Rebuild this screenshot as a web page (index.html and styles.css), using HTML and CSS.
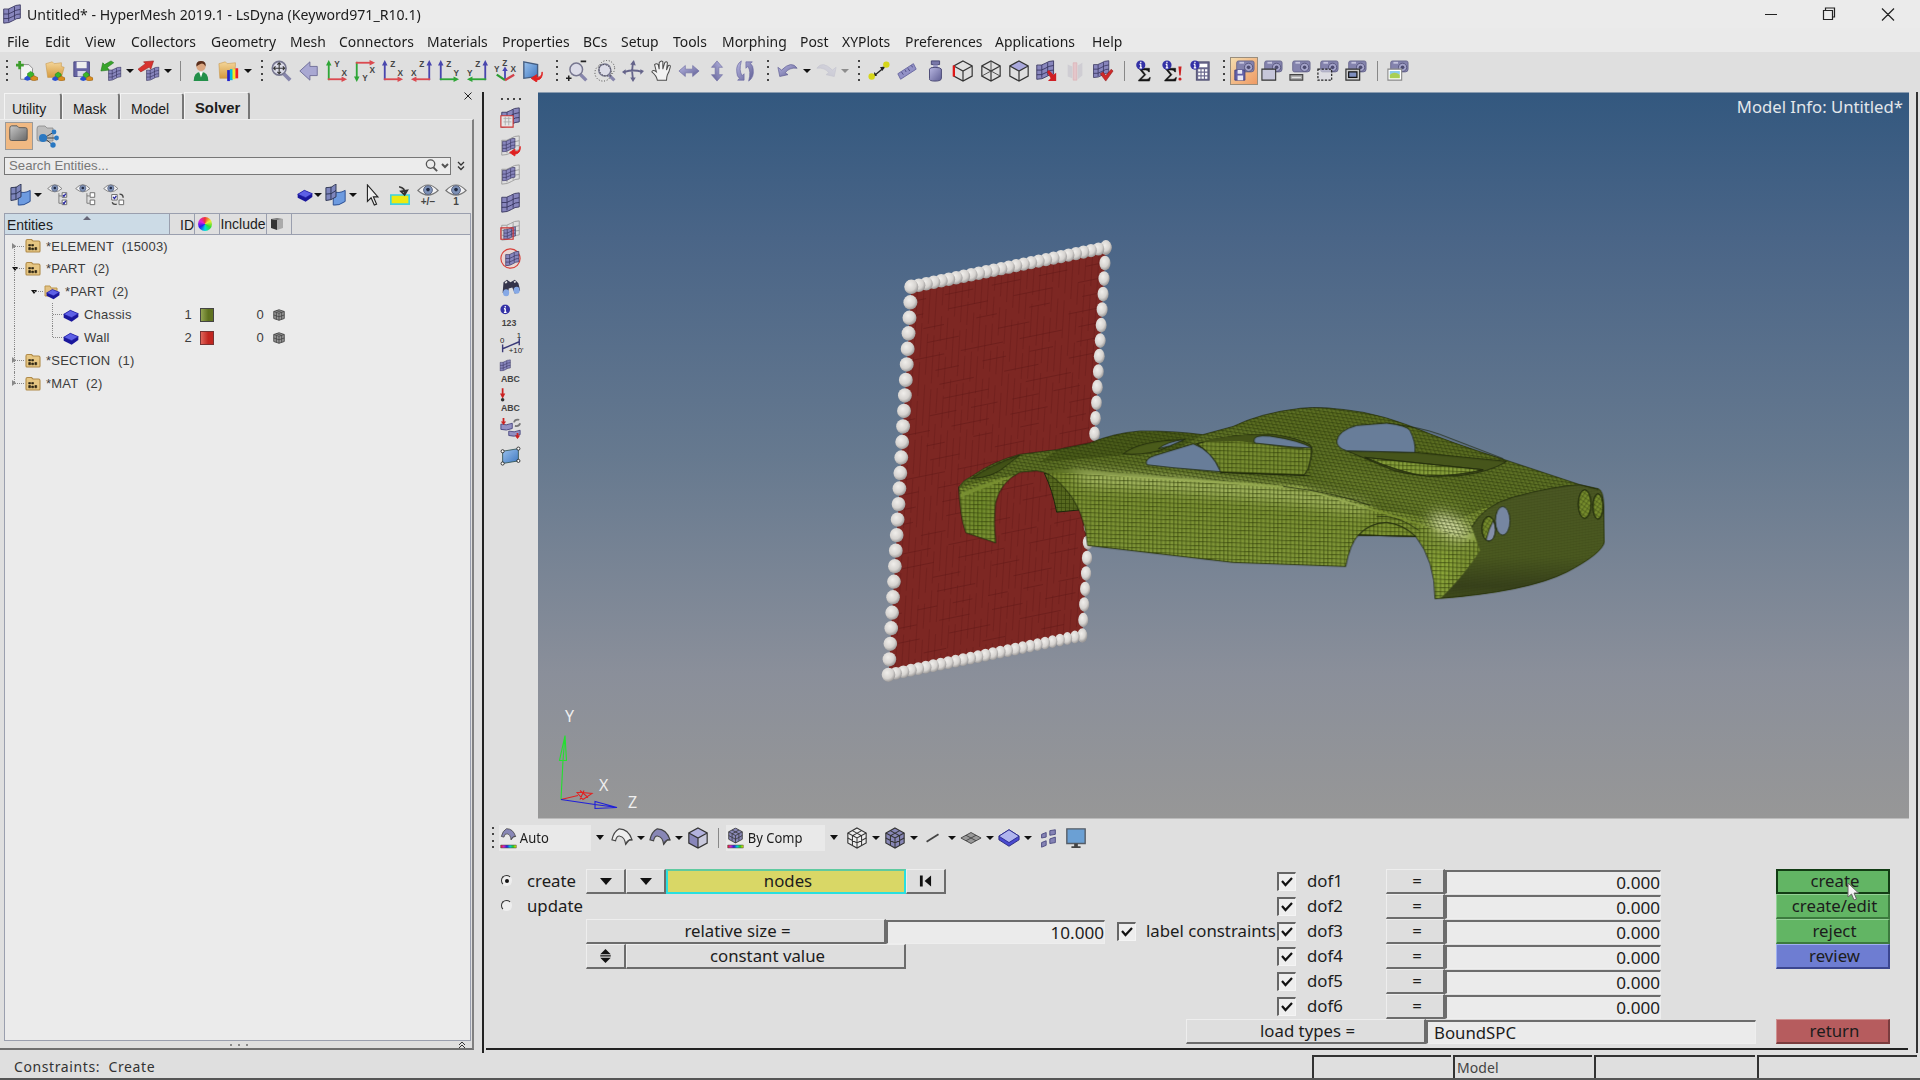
FILE: index.html
```html
<!DOCTYPE html>
<html lang="en">
<head>
<meta charset="utf-8">
<title>Untitled* - HyperMesh 2019.1</title>
<link rel="stylesheet" href="styles.css">
</head>
<body>
<svg class="sprite" aria-hidden="true">
<defs>
<linearGradient id="lav" x1="0" y1="0" x2="1" y2="1"><stop offset="0" stop-color="#b9b8e2"/><stop offset="1" stop-color="#5f5e94"/></linearGradient>
<linearGradient id="fold" x1="0" y1="0" x2="0" y2="1"><stop offset="0" stop-color="#f4d69a"/><stop offset="1" stop-color="#d59a3e"/></linearGradient>
<linearGradient id="gray" x1="0" y1="0" x2="1" y2="1"><stop offset="0" stop-color="#c9c9c9"/><stop offset="1" stop-color="#666"/></linearGradient>
<linearGradient id="blu" x1="0" y1="0" x2="1" y2="1"><stop offset="0" stop-color="#9cc3ee"/><stop offset="1" stop-color="#3f78c0"/></linearGradient>
<linearGradient id="rainbow"><stop offset="0" stop-color="#e22"/><stop offset=".2" stop-color="#c2c"/><stop offset=".4" stop-color="#22d"/><stop offset=".6" stop-color="#0cd"/><stop offset=".8" stop-color="#2c2"/><stop offset="1" stop-color="#fe0"/></linearGradient>
<symbol id="balls" viewBox="0 0 14 10"><path d="M1 7l3-2 3 2v2l-3 1-3-1z" fill="#2a50d0"/><path d="M4 3l3-2 3 2v2L7 7 4 5z" fill="#3bb52a" stroke="#1c7a17" stroke-width=".5"/><path d="M7 7l3-2 4 2v2l-4 1-3-1z" fill="#d98e1e" stroke="#8a5510" stroke-width=".5"/></symbol>
<symbol id="mesh" viewBox="0 0 24 24"><path d="M2 6Q8 7 12 4T22 1V17Q17 17 13 20T2 23z" fill="#8886bd"/><path d="M2 6Q8 7 12 4T22 1V17Q17 17 13 20T2 23zM2 12Q8 13 12 10T22 6.500M2 17.500Q8 18.500 13 15T22 12M8 6v15M15 3v15" fill="none" stroke="#35325c" stroke-width="1"/></symbol>
<symbol id="wire" viewBox="0 0 24 24"><path d="M2 6Q8 7 12 4T22 1V17Q17 17 13 20T2 23zM2 12Q8 13 12 10T22 6.500M2 17.500Q8 18.500 13 15T22 12M8 6v15M15 3v15" fill="none" stroke="#999" stroke-width="1"/></symbol>
<symbol id="new" viewBox="0 0 24 24"><path d="M5 5h9l4 4v12H5z" fill="#f3f3f3" stroke="#8a8a8a"/><path d="M4 1v9M-.5 5.500h9" stroke="#3d9d2c" stroke-width="3"/><use href="#balls" x="8" y="11" width="16" height="12"/></symbol>
<symbol id="open" viewBox="0 0 24 24"><path d="M2 4l7-2 2 2 8-1v4l3 1-3 11H4z" fill="url(#fold)" stroke="#c79447" stroke-width=".6"/><use href="#balls" x="8" y="12" width="15" height="11"/></symbol>
<symbol id="save" viewBox="0 0 24 24"><path d="M2 2h17v16H2z" fill="#6664a3" stroke="#484680"/><path d="M5 2h11v7H5z" fill="#eee"/><path d="M6 12h9v6H6z" fill="#d6d6e8"/><use href="#balls" x="8" y="12" width="15" height="11"/></symbol>
<symbol id="import" viewBox="0 0 24 24"><use href="#mesh" x="8" y="7" width="16" height="16"/><path d="M15 3L8 8l2 3-9 1 2-9 2 2 7-4z" fill="#38a52b" stroke="#20731a" stroke-width=".6"/></symbol>
<symbol id="export" viewBox="0 0 24 24"><use href="#mesh" x="8" y="7" width="16" height="16"/><path d="M0 10l8-6-2-2 11-1-3 9-2-2-9 5z" fill="#d8332f" stroke="#96201e" stroke-width=".6"/></symbol>
<symbol id="user" viewBox="0 0 24 24"><path d="M4 23q0-10 8-10t8 10z" fill="#23904a"/><path d="M10 13l2 6 2-6z" fill="#fff"/><circle cx="12" cy="7" r="5" fill="#dba782"/><path d="M7 7q-1-6 5-6t5 6q-2-4-5-3T7 7" fill="#5a2e1c"/></symbol>
<symbol id="chart" viewBox="0 0 24 24"><path d="M1 4l7-2 2 2 9-1v4l-2 13H2z" fill="url(#fold)" stroke="#c79447" stroke-width=".6"/><path d="M10 11h3v12h-3z" fill="#22c"/><path d="M13 10h3v12h-3z" fill="#0bd"/><path d="M16 10h3v11h-3z" fill="#ee2"/><path d="M19 9h3v11h-3z" fill="#e22"/></symbol>
<symbol id="zoom" viewBox="0 0 24 24"><path d="M15 15l7 7" stroke="#8786ac" stroke-width="4"/><circle cx="10" cy="9" r="7.500" fill="#dcdce8" stroke="#777790" stroke-width="1.800"/></symbol>
<symbol id="fit" viewBox="0 0 24 24"><use href="#zoom"/><path d="M10 3v12M4 9h12M8 5l2-2 2 2M8 13l2 2 2-2M6 7L4 9l2 2M14 7l2 2-2 2" fill="none" stroke="#333" stroke-width="1.200"/></symbol>
<symbol id="back" viewBox="0 0 24 24"><path d="M2 12L13 2v5h8v10h-8v5z" fill="#a9a8d2" stroke="#6d6c97"/></symbol>
<symbol id="ax" viewBox="0 0 24 24"><path d="M3 22V4" stroke="var(--v)" stroke-width="2" /><path d="M0 6l3-6 3 6z" fill="var(--v)"/><path d="M2 21h18" stroke="var(--h)" stroke-width="2"/><path d="M17 18l6 3-6 3z" fill="var(--h)"/></symbol>
<symbol id="iso" viewBox="0 0 24 24"><path d="M12 21V10" stroke="#4a49b5" stroke-width="2"/><path d="M9 12l3-5 3 5z" fill="#4a49b5"/><path d="M12 22L3 16" stroke="#2c9d33" stroke-width="2.500"/><path d="M12 22l10-6" stroke="#d2404a" stroke-width="2.500"/></symbol>
<symbol id="screen" viewBox="0 0 24 24"><path d="M2 2l15 3v13L2 20z" fill="url(#blu)" stroke="#445d80" stroke-width="1.500"/><path d="M22 13q0 6-6 6v-3l-6 4 6 4v-2q7-1 6-9z" fill="#df2020" stroke="#df2020"/></symbol>
<symbol id="zoompm" viewBox="0 0 24 24"><use href="#zoom" x="2" y="2"  width="22" height="22"/><path d="M16 1.500h6M0 20h6M3 17v6" stroke="#222" stroke-width="1.700"/></symbol>
<symbol id="zoombox" viewBox="0 0 24 24"><use href="#zoom" x="3" y="3" width="21" height="21"/><circle cx="14" cy="9" r="8.500" fill="none" stroke="#333" stroke-dasharray="1 2"/><circle cx="10" cy="14" r="9" fill="none" stroke="#333" stroke-dasharray="1 2"/></symbol>
<symbol id="cross" viewBox="0 0 24 24"><path d="M12 2q-2 10 0 20M3 13q9-3 19 0" stroke="#65648a" stroke-width="2" fill="none"/><path d="M9 5l4-5 2 6zM9 19l3 5 3-5zM4 10l-4 3 4 3zM20 10l4 2-4 4z" fill="#65648a"/></symbol>
<symbol id="hand" viewBox="0 0 24 24"><path d="M8 22q-1-5-6-9 1-3 5 0L5 5q2-2 4 0l1 5V3q2-3 4-1v8l2-7q2-2 3 0l-1 8 2-5q3-1 2 2-1 5-3 8-1 3-1 6z" fill="#f2f2f2" stroke="#4c4c4c" stroke-width="1.100"/></symbol>
<symbol id="lr" viewBox="0 0 24 24"><path d="M1 12l7-6v4h8V6l7 6-7 6v-4H8v4z" fill="url(#lav)" stroke="#6f6ea3" stroke-width=".7"/></symbol>
<symbol id="rot" viewBox="0 0 24 24"><path d="M8 1Q2 5 3 13q0 5 3 7l-2 2h7v-7l-2 2Q5 12 8 1zM16 23q6-4 5-12 0-5-3-7l2-2h-7v7l2-2q4 5 1 16z" fill="url(#lav)" stroke="#6766a0" stroke-width=".7"/></symbol>
<symbol id="undo" viewBox="0 0 24 24"><path d="M1 8l2 10 9-2-3-2q4-6 13-5-6-9-17 2z" fill="url(#lav)" stroke="#5c5b90" stroke-width=".7"/></symbol>
<symbol id="meas" viewBox="0 0 24 24"><path d="M7 17L18 8" stroke="#222" stroke-width="1.500"/><path d="M6 18l1-5 3 4zM18 7l-5 1 3 4z" fill="#222"/><circle cx="4" cy="18" r="3.500" fill="#d6d619"/><circle cx="20" cy="5" r="3.500" fill="#d6d619"/></symbol>
<symbol id="ruler" viewBox="0 0 24 24"><path d="M2 15L19 4l3 6L5 21z" fill="#9291c6" stroke="#6867a0"/><path d="M6 13l2 3M10 11l1 2M13 9l2 3M17 6l1 2" stroke="#4a4980"/></symbol>
<symbol id="weight" viewBox="0 0 24 24"><path d="M8 1h9v4H8z" fill="#7877a8" stroke="#444370"/><path d="M10 5h5v3h-5z" fill="#9997c4"/><path d="M6 10q0-2 6-2t7 2v10q0 3-7 3t-6-3z" fill="url(#lav)" stroke="#444370"/></symbol>
<symbol id="cube" viewBox="0 0 24 24"><path d="M12 1l10 5.500v11L12 23 2 17.500v-11zM2 6.500L12 12l10-5.500M12 12v11" fill="none" stroke="#333" stroke-width="1.300"/></symbol>
<symbol id="cubeR" viewBox="0 0 24 24"><use href="#cube"/><path d="M2 6v12" stroke="#e01818" stroke-width="2.500"/></symbol>
<symbol id="cubeX" viewBox="0 0 24 24"><use href="#cube"/><path d="M12 1v11L2 17.500M12 12l10 5.500" fill="none" stroke="#444"/></symbol>
<symbol id="cubeT" viewBox="0 0 24 24"><path d="M12 1l10 5.500L12 12 2 6.500z" fill="#aaa9dc"/><use href="#cube"/></symbol>
<symbol id="cubeF" viewBox="0 0 24 24"><path d="M12 1l10 5.500L12 12 2 6.500z" fill="#b3b2de"/><path d="M2 6.500L12 12v11L2 17.500z" fill="#8886ba"/><path d="M22 6.500L12 12v11l10-5.500z" fill="#c9c9dc"/><use href="#cube"/></symbol>
<symbol id="cubeG" viewBox="0 0 24 24"><path d="M12 1l10 5.500v11L12 23 2 17.500v-11z" fill="var(--f)" stroke="#333" stroke-width="1.200"/><path d="M2 6.500L12 12l10-5.500M12 12v11M2 12l10 5.500L22 12M7 4l10 5.500v10M17 4L7 9.500v10" fill="none" stroke="#333" stroke-width="1.100"/></symbol>
<symbol id="meshA" viewBox="0 0 24 24"><use href="#mesh" x="-1" width="22" height="22"/><path d="M12 13l2-2 5 5 3-2v9h-9l3-3z" fill="#cf1f24"/></symbol>
<symbol id="meshS" viewBox="0 0 24 24"><path d="M4 5l5 2v13l-5-2zM15 6l5-3v14l-5 4z" fill="#cfcdd3"/><path d="M10 3h4v19h-4z" fill="#e4c6ca" stroke="#dba9ae" stroke-width=".6"/></symbol>
<symbol id="meshC" viewBox="0 0 24 24"><use href="#mesh" x="0" width="20" height="20"/><path d="M9 15l3-2 3 4 6-7 2 2-8 11z" fill="#cf2a2a" stroke="#8e1717" stroke-width=".6"/></symbol>
<symbol id="info" viewBox="0 0 12 12"><circle cx="6" cy="6" r="5.500" fill="#3331a6"/><path d="M6 5v5M4.500 5.300H6M4.500 9.500h3M6 2v1.800" stroke="#fff" stroke-width="1.500"/></symbol>
<symbol id="sum" viewBox="0 0 24 24"><path d="M7 9h11v4h-1q-1-2-3-2h-4l4 5-5 5h6q2 0 3-2h1l-1 4H6v-1l6-6-5-6z" fill="#151515" stroke="#151515" stroke-width=".5"/><use href="#info" x="3" y="0" width="11" height="11"/></symbol>
<symbol id="sumx" viewBox="0 0 24 24"><use href="#sum" x="-2"/><path d="M19 7h3.400l-1 10h-1.400z" fill="#c22"/><circle cx="20.700" cy="20.700" r="1.700" fill="#c22"/></symbol>
<symbol id="calc" viewBox="0 0 24 24"><rect x="8" y="2" width="14" height="20" fill="#6a698e" stroke="#4f4e70"/><path d="M10 4h10v4H10zM10 10h2.500v2.500H10zM13.700 10h2.500v2.500h-2.500zM17.500 10H20v2.500h-2.500zM10 14h2.500v2.500H10zM13.700 14h2.500v2.500h-2.500zM17.500 14H20v2.500h-2.500zM10 18h2.500v2.500H10zM13.700 18h2.500v2.500h-2.500zM17.500 18H20v2.500h-2.500z" fill="#fff"/><use href="#info" x="1" y="0" width="11" height="11"/></symbol>
<symbol id="cam" viewBox="0 0 24 24"><path d="M4 3q0-2 2-2h15q2 0 2 2v7q0 3-3 3H6q-2 0-2-2z" fill="#8483ad" stroke="#5c5b82" stroke-width=".8"/><path d="M7 2h5v2H7z" fill="#c5c4de"/><circle cx="17" cy="8" r="4.500" fill="#a5a4ca" stroke="#54537a"/><circle cx="17" cy="8" r="2" fill="#4c4b70"/></symbol>
<symbol id="camD" viewBox="0 0 24 24"><use href="#cam"/><path d="M2 11h11v11H2z" fill="#6361a8" stroke="#45437d"/><path d="M5 11h5v4H5zM5 17h6v5H5z" fill="#e8e8f4"/></symbol>
<symbol id="camW" viewBox="0 0 24 24"><use href="#cam"/><path d="M1 10h15v12H1z" fill="#c6c6da" stroke="#333" stroke-width="1.200"/></symbol>
<symbol id="camB" viewBox="0 0 24 24"><use href="#cam"/><path d="M1 16h14v6H1z" fill="#aaa" stroke="#444" stroke-width="1.200"/><path d="M3 19h10" stroke="#eee"/></symbol>
<symbol id="camS" viewBox="0 0 24 24"><use href="#cam"/><path d="M1 10h15v12H1z" fill="#dcdce4" fill-opacity=".6" stroke="#222" stroke-width="1.300" stroke-dasharray="2.500 1.500"/></symbol>
<symbol id="camF" viewBox="0 0 24 24"><use href="#cam"/><path d="M1 10h15v12H1z" fill="#ccc" stroke="#333" stroke-width="1.300"/><path d="M4 13h9v6H4z" fill="#7f8fc0" stroke="#111" stroke-width="1.300"/></symbol>
<symbol id="camP" viewBox="0 0 24 24"><use href="#cam"/><path d="M1 10h15v12H1z" fill="#fff" stroke="#888" stroke-width="1.200"/><path d="M3 12h11v4H3z" fill="#8ccbee"/><path d="M3 16q5-4 11 0v4H3z" fill="#a8cf55"/></symbol>
<symbol id="folder" viewBox="0 0 24 24"><path d="M3 5q0-3 2-3h6l2 2h7q2 0 2 2v10q0 2-2 2H5q-2 0-2-2z" fill="url(#gray)" stroke="#555"/></symbol>
<symbol id="share" viewBox="0 0 24 24"><path d="M2 5q0-3 2-3h6l2 2h6v13H4q-2 0-2-2z" fill="#bdbdbd" stroke="#888" stroke-width=".8"/><path d="M9 14l10-6M9 14l12 0M9 14l9 7" stroke="#444"/><circle cx="8" cy="14" r="4" fill="#2a78c2"/><circle cx="19" cy="8" r="2.400" fill="#2a78c2"/><circle cx="21.500" cy="14" r="2.400" fill="#2a78c2"/><circle cx="18" cy="21" r="2.700" fill="#2a78c2"/></symbol>
<symbol id="surf" viewBox="0 0 24 24"><path d="M9 8q6 3 13-1v12q-7 5-13 4z" fill="#6d9be0" stroke="#27498c"/><path d="M1 4q6 1 11-4v14q-5 4-11 4z" fill="#7e86bd" stroke="#28304f"/><path d="M1 11q6 1 11-4M6.500 3v14" stroke="#28304f" fill="none"/></symbol>
<symbol id="eye" viewBox="0 0 24 14"><path d="M1 7Q12-5 23 7 12 17 1 7z" fill="#f2f2f4" stroke="#777" stroke-width="1.300"/><circle cx="12" cy="6.500" r="4.800" fill="#7f93b8" stroke="#555f7c"/><circle cx="12" cy="6" r="2" fill="#222b44"/></symbol>
<symbol id="eyeA" viewBox="0 0 24 24"><use href="#eye" x="0" y="0" width="17" height="10"/><path d="M13 10v11h3M13 13h3" fill="none" stroke="#777"/><path d="M16.500 9.500h5v5h-5zM16.500 17.500h5v5h-5z" fill="#fff" stroke="#666"/></symbol>
<symbol id="eyeB" viewBox="0 0 24 24"><use href="#eyeA"/><path d="M17.500 12l1 1.500 2-3M17.500 20l1 1.500 2-3" stroke="#2a2aa0" stroke-width="1.500" fill="none"/></symbol>
<symbol id="eyeC" viewBox="0 0 24 24"><use href="#eye" x="0" y="0" width="17" height="10"/><path d="M9.500 11.500h6v6h-6zM17.500 17.500h5v5h-5z" fill="#fff" stroke="#666"/><path d="M11 14l1.500 2 2-3" stroke="#2a2aa0" stroke-width="1.500" fill="none"/><path d="M18 11q4 0 4 4M10 20q1 3 5 2" fill="none" stroke="#444" stroke-width="1.500"/></symbol>
<symbol id="block" viewBox="0 0 24 24"><path d="M1 11l10-6 12 5v5l-10 7-12-6z" fill="#1a179c"/><path d="M1 11l10-6 12 5-10 6z" fill="#5d60e6" stroke="#1c1aa0"/></symbol>
<symbol id="cur" viewBox="0 0 24 24"><path d="M7 1v18l4-4 3.500 8 2.500-1-3.500-8h5z" fill="#eee" stroke="#222" stroke-width="1.200"/></symbol>
<symbol id="yel" viewBox="0 0 24 24"><path d="M2 12h20v10H2z" fill="#ecea12" stroke="#3fd2e2" stroke-width="1.800"/><path d="M11 3q7 1 6 8M13 8l4 4 3-5z" stroke="#333" stroke-width="1.800" fill="#333" fill-opacity=".2"/></symbol>
<symbol id="gfold" viewBox="0 0 16 16"><path d="M1 3q0-1.500 1.500-1.500h4L8 3h5.500Q15 3 15 4.500v8.500q0 1-1 1H2q-1 0-1-1z" fill="#e6c682" stroke="#b08a48" stroke-width="1.100"/><path d="M3.700 6.500h1.800v1.500H3.700zM6.700 6.500H8.500v1.500H6.700zM3.700 9.500h1.800v2.300H3.700zM6.700 10h1.800v1.800H6.700zM9.900 9.500h1.800v2.300H9.900z" fill="#2c2412" stroke="#2c2412" stroke-width=".6"/></symbol>
<symbol id="mcube" viewBox="0 0 16 16"><path d="M2 4l6-2 6 2v8l-6 2-6-2z" fill="#969696" stroke="#444"/><path d="M2 4l6 2 6-2M8 6v8M2 8l6 2 6-2M5 5v8M11 5v8M5 3l6 2" stroke="#444" fill="none" stroke-width=".9"/></symbol>
<symbol id="binoc" viewBox="0 0 24 24"><path d="M4 6l4-3 4 3 5-3 4 4 2 8-6 4-3-7-4 1-1 8-6-3z" fill="#34344a"/><ellipse cx="7" cy="18" rx="3.500" ry="4" fill="#86a9e6"/><ellipse cx="19" cy="15" rx="3.500" ry="4" fill="#86a9e6"/><path d="M6 7l2-2M16 6l2-1" stroke="#ddd" stroke-width="2"/></symbol>
<symbol id="curve" viewBox="0 0 24 24"><path d="M1 14Q3 5 9 2q10 0 14 12l-3 0-4 5q-1-8-6-9-4-1-5 5z" fill="var(--f)" stroke="#444" stroke-width="1.200"/><path d="M16 19q1-5 7-5" stroke="#444" fill="none" stroke-width="1.100"/></symbol>
<symbol id="mon" viewBox="0 0 24 24"><path d="M2 2h20v16H2z" fill="#6ba0d4" stroke="#555c66" stroke-width="1.500"/><path d="M10 18h4v3h3v2H7v-2h3z" fill="#444"/></symbol>
<symbol id="lens" viewBox="0 0 16 16"><circle cx="7" cy="6.500" r="4.500" fill="none" stroke="#555" stroke-width="1.400"/><path d="M10 10l4 4" stroke="#555" stroke-width="2"/></symbol>
<symbol id="tick" viewBox="0 0 16 16"><path d="M3 7l3.500 4L13 4" fill="none" stroke="#111" stroke-width="2.200"/></symbol>
</defs>
</svg>

<div class="window">
<header class="title"><svg class="logo"><use href="#mesh"/></svg><span class="tt">Untitled* - HyperMesh 2019.1 - LsDyna (Keyword971_R10.1)</span>
<svg class="wbtn" viewBox="0 0 150 28"><path d="M10 14.500h12M68.500 10.500h9v9h-9zM70.500 10v-2h9v9h-2M127 8.500l12 12M139 8.500l-12 12" fill="none" stroke="#222" stroke-width="1.200"/></svg></header>
<nav class="menu"><span>File</span><span>Edit</span><span>View</span><span>Collectors</span><span>Geometry</span><span>Mesh</span><span>Connectors</span><span>Materials</span><span>Properties</span><span>BCs</span><span>Setup</span><span>Tools</span><span>Morphing</span><span>Post</span><span>XYPlots</span><span>Preferences</span><span>Applications</span><span>Help</span></nav>

<div class="toolbar">
<i class="grip g1"></i><svg><use href="#new"/></svg><svg><use href="#open"/></svg><svg><use href="#save"/></svg><svg><use href="#import"/></svg><b class="car"></b><svg><use href="#export"/></svg><b class="car"></b><i class="sep w14"></i><svg><use href="#user"/></svg><svg><use href="#chart"/></svg><b class="car"></b>
<i class="grip g2"></i><svg><use href="#fit"/></svg><svg><use href="#back"/></svg>
<svg class="vg hr" viewBox="0 0 24 24"><use href="#ax"/><text x="9" y="8">Y</text><text x="17" y="17">X</text></svg>
<svg class="vg hr" viewBox="0 0 24 24"><g transform="matrix(1 0 0 -1 0 24)"><use href="#ax" width="24" height="24"/></g><text x="9" y="23">Y</text><text x="17" y="14">X</text></svg>
<svg class="vb hr" viewBox="0 0 24 24"><use href="#ax"/><text x="9" y="8">Z</text><text x="17" y="17">X</text></svg>
<svg class="vb hr" viewBox="0 0 24 24"><g transform="matrix(-1 0 0 1 24 0)"><use href="#ax" width="24" height="24"/></g><text x="10" y="8">Z</text><text x="1" y="17">X</text></svg>
<svg class="vb hg" viewBox="0 0 24 24"><use href="#ax"/><text x="9" y="8">Z</text><text x="17" y="17">Y</text></svg>
<svg class="vb hg" viewBox="0 0 24 24"><g transform="matrix(-1 0 0 1 24 0)"><use href="#ax" width="24" height="24"/></g><text x="10" y="8">Z</text><text x="1" y="17">Y</text></svg>
<svg viewBox="0 0 24 24"><use href="#iso"/><text x="0" y="13">Y</text><text x="9" y="7">Z</text><text x="18" y="13">X</text></svg>
<svg><use href="#screen"/></svg>
<i class="grip g3"></i><svg><use href="#zoompm"/></svg><svg><use href="#zoombox"/></svg><svg><use href="#cross"/></svg><svg><use href="#hand"/></svg><svg><use href="#lr"/></svg><svg class="r90"><use href="#lr"/></svg><svg><use href="#rot"/></svg>
<i class="grip g4"></i><svg><use href="#undo"/></svg><b class="car"></b><svg class="flip"><use href="#undo"/></svg><b class="car dim"></b>
<i class="grip g4"></i><svg><use href="#meas"/></svg><svg><use href="#ruler"/></svg><svg><use href="#weight"/></svg><svg><use href="#cubeR"/></svg><svg><use href="#cubeX"/></svg><svg><use href="#cubeT"/></svg><svg><use href="#meshA"/></svg><svg><use href="#meshS"/></svg><svg><use href="#meshC"/></svg><i class="sep w12"></i><svg><use href="#sum"/></svg><svg><use href="#sumx"/></svg><svg><use href="#calc"/></svg>
<i class="grip g3"></i><svg class="on"><use href="#camD"/></svg><svg><use href="#camW"/></svg><svg><use href="#camB"/></svg><svg><use href="#camS"/></svg><svg><use href="#camF"/></svg><i class="sep w14"></i><svg><use href="#camP"/></svg>
</div>

<main class="work">
<aside class="browser">
<div class="tabs"><span>Utility</span><span>Mask</span><span>Model</span><span class="sel">Solver</span><svg class="x" viewBox="0 0 10 10"><path d="M1.500 1.500l7 7M8.500 1.500l-7 7" stroke="#222"/></svg></div>
<div class="pane">
<div class="modes"><svg class="on"><use href="#folder"/></svg><svg><use href="#share"/></svg></div>
<div class="search"><div class="box"><span>Search Entities...</span><svg><use href="#lens"/></svg><svg class="cv" viewBox="0 0 10 10"><path d="M2 3l3 3 3-3" fill="none" stroke="#555" stroke-width="2"/></svg></div><svg class="dbl" viewBox="0 0 10 12"><path d="M2 2l3 3 3-3M2 6.500l3 3 3-3" fill="none" stroke="#333" stroke-width="1.300"/></svg></div>
<div class="acts"><svg><use href="#surf"/></svg><b class="car"></b><svg class="s28"><use href="#eyeB"/></svg><svg class="s28"><use href="#eyeA"/></svg><svg class="s28"><use href="#eyeC"/></svg><i class="fill"></i><svg class="sm"><use href="#block"/></svg><b class="car"></b><svg><use href="#surf"/></svg><b class="car"></b><svg class="s28"><use href="#cur"/></svg><svg class="s28"><use href="#yel"/></svg><span class="eyel"><svg><use href="#eye"/></svg>+/−</span><span class="eyel"><svg><use href="#eye"/></svg>1</span></div>
<div class="grid head"><span class="sorted">Entities<svg viewBox="0 0 8 4"><path d="M0 4l4-4 4 4z" fill="#667"/></svg></span><span class="r">ID</span><span class="c"><i class="wheel"></i></span><span class="c">Include</span><span class="c"><svg class="hc" viewBox="0 0 14 14"><path d="M1 2l6 1v10l-6-2z" fill="#333"/><path d="M7 3l6-1v9l-6 2z" fill="#aaa"/><path d="M1 2l6-1 6 1-6 1z" fill="#777"/></svg></span><span></span></div>
<div class="tree">
<div class="row shut"><span class="n l0"><svg><use href="#gfold"/></svg>*ELEMENT&nbsp; (15003)</span></div>
<div class="row open"><span class="n l0"><svg><use href="#gfold"/></svg>*PART&nbsp; (2)</span></div>
<div class="row open"><span class="n l1"><svg viewBox="0 0 16 16"><path d="M1 2h5l1 2h6v8H1z" fill="#e3c283" stroke="#bd964c"/><use href="#block" x="2" y="2" width="14" height="15"/></svg>*PART&nbsp; (2)</span></div>
<div class="row"><span class="n l2"><svg><use href="#block"/></svg>Chassis</span><span class="r">1</span><span class="c"><i class="sw grn"></i></span><span class="r z">0</span><span class="c"><svg><use href="#mcube"/></svg></span></div>
<div class="row last"><span class="n l2"><svg><use href="#block"/></svg>Wall</span><span class="r">2</span><span class="c"><i class="sw red"></i></span><span class="r z">0</span><span class="c"><svg><use href="#mcube"/></svg></span></div>
<div class="row shut"><span class="n l0"><svg><use href="#gfold"/></svg>*SECTION&nbsp; (1)</span></div>
<div class="row shut"><span class="n l0"><svg><use href="#gfold"/></svg>*MAT&nbsp; (2)</span></div>
</div>
<div class="foot"><i class="grip h"></i><svg viewBox="0 0 8 8"><path d="M1 4l3-3 3 3M1 7l3-3 3 3" fill="none" stroke="#333"/></svg></div>
</div>
</aside>

<section class="right">
<div class="upper">
<div class="side">
<i class="grip h"></i>
<svg viewBox="0 0 24 24"><use href="#mesh"/><path d="M1 10h14v13H1z" fill="#e6e6e6" stroke="#c33" stroke-width="1.300"/><path d="M4 13h9M4 17h9M6 11v10M10 11v10" stroke="#aaa"/></svg>
<svg viewBox="0 0 24 24"><use href="#wire"/><use href="#mesh" x="1" y="3" width="18" height="17"/><path d="M23 13q0 6-6 6v-3l-6 4 6 4v-2q7-1 6-9z" fill="#df2020" stroke="#df2020"/></svg>
<svg viewBox="0 0 24 24"><use href="#wire"/><use href="#mesh" x="1" y="3" width="18" height="17"/></svg>
<svg viewBox="0 0 24 24"><use href="#mesh"/></svg>
<svg viewBox="0 0 24 24"><use href="#wire"/><use href="#mesh" x="1" y="7" width="20" height="16"/><path d="M1 9h14v13H1z" fill="none" stroke="#c33" stroke-width="1.400"/></svg>
<svg viewBox="0 0 24 24"><circle cx="12" cy="12" r="11" fill="#e8d6d4" stroke="#d8403a" stroke-width="1.300"/><use href="#mesh" x="5" y="3" width="18" height="18"/></svg>
<svg viewBox="0 0 24 24"><use href="#binoc"/></svg>
<svg viewBox="0 0 24 24"><use href="#info" x="0" y="-1" width="12" height="12"/><text class="t" x="2" y="24">123</text></svg>
<svg viewBox="0 0 24 24"><path d="M3 13v9M22 6v8M3 18L22 10" stroke="#3b3a78" stroke-width="1.600"/><text class="q" x="0" y="11">0</text><text class="q" x="19" y="6">1</text><text class="q" x="10" y="23">+10'</text></svg>
<svg viewBox="0 0 24 24"><use href="#mesh" x="-1" y="-2" width="14" height="14"/><text class="t" x="1" y="24">ABC</text></svg>
<svg viewBox="0 0 24 24"><path d="M3 -2v8" stroke="#c22" stroke-width="2"/><path d="M0 4h6l-3 6z" fill="#c22"/><circle cx="3" cy="11" r="2" fill="#333"/><text class="t" x="1" y="24">ABC</text></svg>
<svg viewBox="0 0 24 24"><path d="M1 7q6 2 13-1v6q-7 3-13 1zM10 15q6 2 13-1v5q-7 3-13 1z" fill="#9391c3" stroke="#45447c"/><path d="M4 0v5M20 17v5" stroke="#c22" stroke-width="2"/><path d="M1 4h6l-3 4zM17 20h6l-3 4z" fill="#c22"/><path d="M16 5q1-4 6-3M23 6q-1 4-6 3" stroke="#777" stroke-width="2" fill="none"/></svg>
<svg viewBox="0 0 24 24"><path d="M3 6l18-3v14L3 20z" fill="url(#blu)" stroke="#355"/><g fill="#fff" stroke="#222"><circle cx="3" cy="6" r="1.800"/><circle cx="21" cy="3" r="1.800"/><circle cx="21" cy="17" r="1.800"/><circle cx="3" cy="20" r="1.800"/></g></svg>
</div>
<div class="view">
<svg id="scene" viewBox="538 92 1371 726" width="1371" height="726">
<defs>
<radialGradient id="ball" cx=".4" cy=".35" r=".7"><stop offset="0" stop-color="#f0eeeb"/><stop offset=".6" stop-color="#d6d3d0"/><stop offset="1" stop-color="#8f8d8d"/></radialGradient>
<pattern id="m1" width="12.500" height="12.500" patternUnits="userSpaceOnUse" patternTransform="skewY(2)"><path d="M0 1.300H12.500M1.300 0V12.500" stroke="#2f3d08" stroke-width="2.400" fill="none" opacity=".75"/></pattern>
<pattern id="m2" width="13" height="10" patternUnits="userSpaceOnUse" patternTransform="skewY(8) skewX(25)"><path d="M0 1.300H13M1.300 0V10" stroke="#26320a" stroke-width="2.200" fill="none" opacity=".7"/></pattern>
<pattern id="m3" width="9" height="8" patternUnits="userSpaceOnUse" patternTransform="skewY(-8)"><path d="M0 1H9M1 0V8" stroke="#2a340d" stroke-width="1.400" fill="none" opacity=".45"/></pattern>
<pattern id="m4" width="11" height="11" patternUnits="userSpaceOnUse" patternTransform="rotate(35)"><path d="M0 1H11M1 0V11" stroke="#2a360a" stroke-width="2" fill="none" opacity=".7"/></pattern>
<linearGradient id="side" x1="0" y1="0" x2="0" y2="1"><stop offset="0" stop-color="#566a20"/><stop offset=".35" stop-color="#788e31"/><stop offset="1" stop-color="#82993a"/></linearGradient>
<linearGradient id="rear" x1="0" y1="0" x2="0" y2="1"><stop offset="0" stop-color="#4c5925"/><stop offset=".6" stop-color="#4c5b21"/><stop offset=".85" stop-color="#38421c"/><stop offset="1" stop-color="#45521c"/></linearGradient>
<linearGradient id="sky" gradientUnits="userSpaceOnUse" x1="0" y1="92" x2="0" y2="818"><stop offset="0" stop-color="#33587f"/><stop offset=".2" stop-color="#4a6587"/><stop offset=".5" stop-color="#66798f"/><stop offset=".8" stop-color="#8a8f9a"/><stop offset="1" stop-color="#979797"/></linearGradient>
<filter id="soft" x="-50%" y="-50%" width="200%" height="200%"><feGaussianBlur stdDeviation="20"/></filter>
<path id="hull" d="M167 457L78 427Q60 380 57 290Q70 268 95 258Q160 212 240 192L350 178L450 158Q520 128 600 122Q700 121 788 133L880 108Q960 68 1080 54Q1150 46 1270 66Q1340 80 1400 103Q1540 160 1700 210L1920 283L1975 295Q1990 300 1991 345L1993 455Q1985 490 1880 545Q1760 605 1485 625Q1485 510 1427 438L1255 434Q1230 460 1217 528L1020 521L880 516L443 465Q432 350 370 288Q330 243 290 241L240 245Q180 275 166 340Q160 400 167 457Z"/>
<clipPath id="hc"><use href="#hull"/></clipPath>
</defs>
<rect x="538" y="92" width="1371" height="726" fill="url(#sky)"/>
<g id="wall"></g>
<g transform="translate(940 390) scale(.33333)" stroke-linejoin="round">
<path d="M313 248Q338 300 350 365L432 357Q405 290 350 255z" fill="#57691f"/><path d="M313 248Q338 300 350 365L432 357Q405 290 350 255z" fill="url(#m1)" stroke="#1d260b" stroke-width="3"/>
<use href="#hull" fill="url(#side)"/>
<g clip-path="url(#hc)">
<path d="M40 300Q200 240 400 248L1080 285Q1250 330 1330 360Q1420 370 1520 400L1640 350L2000 290V20H200L40 180z" fill="#5e7225"/>
<g filter="url(#soft)"><path d="M1120 240Q1300 330 1500 390L1620 350 1500 290 1200 230z" fill="#697e2c"/><path d="M100 300L160 300 140 440 80 420z" fill="#6f8a2a"/></g>
<path d="M390 150Q600 110 790 133L700 180 540 195 300 215z" fill="#4b5d1a"/>
<path d="M880 108Q1150 20 1400 103L1700 210L1500 260 1300 170 1100 140z" fill="#5b6e21"/>
<g filter="url(#soft)"><path d="M380 242L700 262L1080 300L1290 345L1280 366L1060 330L700 295L440 280z" fill="#b9ca79"/><ellipse cx="1530" cy="408" rx="66" ry="29" fill="#dde5ae" transform="rotate(25 1530 408)"/><path d="M1480 480l70 20-60 130-20-60z" fill="#8faa3a"/></g>
<path d="M40 320Q200 240 400 236L1080 290L1350 370L1560 440L2000 300V20H40z" fill="url(#m2)"/>
<path d="M350 246L1080 296L1330 370L1560 440L1640 460V640H40V330L240 250z" fill="url(#m1)"/>
<path d="M1595 410Q1630 345 1720 320Q1850 285 1920 283L2000 295V640H1485Q1570 560 1620 480z" fill="url(#rear)"/>
<path d="M1595 410Q1630 345 1720 320Q1850 285 1920 283L2000 295V640H1485Q1570 560 1620 480z" fill="url(#m3)"/>
</g>
<g stroke="#1d260b" stroke-width="2.400" fill="none">
<path d="M770 160Q880 128 1000 133Q1080 145 1112 165Q1120 180 1105 235L1092 254L842 246Q825 195 770 160z" fill="#768c30"/>
<path d="M770 160Q880 128 1000 133Q1080 145 1112 165Q1120 180 1105 235L1092 254L842 246Q825 195 770 160z" fill="url(#m1)"/>
<path d="M780 155Q880 128 1000 133Q1080 145 1112 168L1080 178L900 152z" fill="#445318" stroke="none"/>
<path d="M550 190Q600 150 730 148L660 180Q600 196 550 190z" fill="#4a5b1a"/>
<path d="M1220 181L1425 186L1700 213Q1650 245 1560 256Q1430 262 1360 240z" fill="#46551b"/>
<path d="M1275 201L1630 238Q1560 256 1460 257Q1390 250 1275 201z" fill="#869f3a"/><path d="M1275 201L1630 238Q1560 256 1460 257Q1390 250 1275 201z" fill="url(#m1)"/>
<path d="M1340 98Q1440 110 1500 132L1690 205"/><path d="M95 264Q160 262 200 225L240 194Q150 225 95 264z" fill="#415116"/>
<path d="M1595 410Q1630 345 1720 320Q1850 285 1920 283L1975 297M1030 288Q1200 310 1290 345M1310 378Q1370 372 1437 420M842 246L1110 256"/>
<path d="M1255 434Q1290 397 1340 396Q1390 402 1427 438z" fill="#7d9432"/><path d="M1255 434Q1290 397 1340 396Q1390 402 1427 438z" fill="url(#m1)"/>
<use href="#hull"/>
</g>
<g stroke="#1d260b" stroke-width="2.500"><g fill="#778d2d"><ellipse cx="1934" cy="341" rx="19" ry="43"/><ellipse cx="1974" cy="348" rx="15" ry="38"/><ellipse cx="1646" cy="415" rx="20" ry="37"/></g><g fill="url(#m4)"><ellipse cx="1934" cy="341" rx="19" ry="43"/><ellipse cx="1974" cy="348" rx="15" ry="38"/><ellipse cx="1646" cy="415" rx="20" ry="37"/></g></g>
<g fill="#7686a1" stroke="#1d260b" stroke-width="2.500"><ellipse cx="1688" cy="391" rx="22" ry="43"/><path d="M1660 390Q1672 420 1660 443Q1650 456 1638 448Q1646 415 1660 390z" fill="#8590a8"/>
<path d="M620 223Q612 205 645 195L760 160Q815 180 842 244L700 232zM655 175Q680 153 735 147L690 166zM942 152Q938 132 990 137Q1080 150 1117 173L1060 170L945 158zM1190 152Q1195 120 1250 105L1340 98Q1400 105 1410 120Q1428 155 1425 186L1220 181Q1190 172 1190 152z" fill="#687d99"/></g>
</g>
<g fill="none" stroke-width="1.100"><path d="M561 799L563 760M559.500 760h7l-1.500-25zM563 760l2-25" stroke="#23e02f"/><path d="M561 799l17-4M577 792l6 7 9-6-10-1zM580 790l8 7M584 790l-4 9" stroke="#e02222"/><path d="M561 799l34 5M595 801v7l22-1zM595 804l22 3" stroke="#2020d8"/></g>
<g class="axl"><text x="565" y="721">Y</text><text x="599" y="790">X</text><text x="628" y="807">Z</text></g>
</svg>
<div class="minfo">Model Info: Untitled*</div>
</div>
</div>

<div class="vbar">
<i class="grip"></i><div class="combo a"><svg viewBox="0 0 24 30"><use href="#curve" class="fl" width="24" height="22"/><path d="M1 25h22v4H1z" fill="url(#rainbow)" stroke="#333" stroke-width=".7"/></svg><span>Auto</span><b class="car"></b></div>
<svg><use href="#curve" class="fw"/></svg><b class="car"></b><svg><use href="#curve" class="fl"/></svg><b class="car"></b><svg><use href="#cubeF"/></svg><i class="sep"></i>
<div class="combo b"><svg viewBox="0 0 24 30"><use href="#cubeG" class="fl" width="24" height="23"/><path d="M1 25h22v4H1z" fill="url(#rainbow)" stroke="#333" stroke-width=".7"/></svg><span>By Comp</span><b class="car"></b></div>
<svg><use href="#cubeG" class="fw"/></svg><b class="car"></b><svg><use href="#cubeG" class="fl"/></svg><b class="car"></b><svg viewBox="0 0 24 24"><path d="M5 16L18 8" stroke="#444" stroke-width="2"/></svg><b class="car"></b><svg viewBox="0 0 24 24"><path d="M1 12l11-6 11 6-11 6zM6.500 9l11 6M17.500 9l-11 6" fill="#999" stroke="#444"/></svg><b class="car"></b><svg viewBox="0 0 24 24"><path d="M1 10l11-7 11 7v4l-11 7L1 14z" fill="#4a4ad0" stroke="#2a2a80"/><path d="M1 10l11-7 11 7-11 7z" fill="#b0b5ee" stroke="#2a2a90"/></svg><b class="car"></b><svg class="m38" viewBox="0 0 24 24"><path d="M5 8l5-2v5l-5 1zM14 4l6-1v5l-6 1zM5 17l5-2v5l-5 2zM14 13l6-2v6l-6 1z" fill="#8583b5" stroke="#4c4a80"/></svg><svg><use href="#mon"/></svg>
</div>

<div class="panel">
<div class="colA">
<div class="ln"><i class="radio on"></i><span class="lab">create</span><button class="bt w40"><b class="tri"></b></button><button class="bt w40"><b class="tri"></b></button><button class="bt nodes">nodes</button><button class="bt w40"><svg viewBox="0 0 14 14"><path d="M1 1h3v12H1zM13 1v12L6 7z" fill="#111"/></svg></button></div>
<div class="ln"><i class="radio"></i><span class="lab">update</span></div>
<div class="ln ind"><button class="bt rel">relative size =</button><span class="in rin">10.000</span><i class="ck m14"><svg><use href="#tick"/></svg></i><span class="lc">label constraints</span></div>
<div class="ln ind"><button class="bt w40"><svg viewBox="0 0 14 16"><path d="M7 0l6 6H1zM7 16l6-6H1zM1 7.200h12v1.400H1z" fill="#111"/></svg></button><button class="bt con">constant value</button></div>
</div>
<div class="colB">
<div class="ln dof"><i class="ck"><svg><use href="#tick"/></svg></i><span>dof1</span><button class="bt">=</button><span class="in">0.000</span></div>
<div class="ln dof"><i class="ck"><svg><use href="#tick"/></svg></i><span>dof2</span><button class="bt">=</button><span class="in">0.000</span></div>
<div class="ln dof"><i class="ck"><svg><use href="#tick"/></svg></i><span>dof3</span><button class="bt">=</button><span class="in">0.000</span></div>
<div class="ln dof"><i class="ck"><svg><use href="#tick"/></svg></i><span>dof4</span><button class="bt">=</button><span class="in">0.000</span></div>
<div class="ln dof"><i class="ck"><svg><use href="#tick"/></svg></i><span>dof5</span><button class="bt">=</button><span class="in">0.000</span></div>
<div class="ln dof"><i class="ck"><svg><use href="#tick"/></svg></i><span>dof6</span><button class="bt">=</button><span class="in">0.000</span></div>
<div class="ln load"><button class="bt lt">load types =</button><span class="in li">BoundSPC</span></div>
</div>
<div class="colC"><button class="bt g foc">create</button><button class="bt g">create/edit</button><button class="bt g">reject</button><button class="bt bl">review</button><button class="bt rd">return</button>
<svg class="pointer" viewBox="0 0 12 20"><path d="M1 1v14l3.500-3 2.500 6 2.500-1-2.500-6h4.500z" fill="#f4f4f4" stroke="#666"/></svg></div>
</div>
</section>
</main>
<footer class="status"><span class="msg">Constraints:&nbsp; Create</span><span class="cell c1"></span><span class="cell c1">Model</span><span class="cell c2"></span><span class="cell c3"></span></footer>
</div>
<script src="scene.js"></script>
</body>
</html>
```
FILE: styles.css
```css
*{box-sizing:border-box}
body{margin:0;background:#dfdfdf;color:#1c1c1c;font-family:"Noto Sans","Open Sans",sans-serif;overflow:hidden}
.sprite{position:absolute;width:0;height:0}
svg{flex:none;overflow:visible}
.window{width:1920px;height:1080px;display:flex;flex-direction:column}
.title{height:28px;background:#ebebeb;display:flex;align-items:center;padding-left:2px}
.logo{width:20px;height:20px}
.tt{margin-left:5px;font-size:15px;white-space:nowrap;transform:scaleX(.94);transform-origin:0 50%}
.wbtn{width:150px;height:28px;margin-left:auto}
.title .wbtn{margin-right:15px}
.menu{height:24px;background:#eaeaea;display:grid;padding-left:6.500px;align-items:center;grid-template-columns:38px 40px 46px 80px 79px 49px 88px 75px 81px 38px 52px 49px 78px 42px 63px 90px 97px 60px}
.menu span{font-size:14.500px;line-height:26px;transform:scaleX(.96);transform-origin:0 50%;white-space:nowrap}
.toolbar{height:40px;background:#dfdfdf;display:flex;align-items:center;padding-bottom:2px}
.toolbar>svg{width:28px;height:28px;padding:3px}
.toolbar svg text{font:bold 9px "Liberation Sans",sans-serif;fill:#444}
.toolbar .vg{--v:#2fa637}
.toolbar .vb{--v:#4846ae}
.toolbar .hr{--h:#db4a50}
.toolbar .hg{--h:#2fa637}
.r90{transform:rotate(90deg)}
.flip{transform:scaleX(-1);opacity:.2}
.toolbar .on{background:linear-gradient(135deg,#f4dcae,#ef9a63);border:1px solid #9a8d7c;padding:2px}
.car{width:10px;display:flex;justify-content:center;flex:none}
.car::after{content:"";border:4px solid transparent;border-top:4px solid #111;border-bottom:0}
.dim{opacity:.4}
.grip{width:2px;height:22px;background:repeating-linear-gradient(#444 0 2px,transparent 2px 6.500px);flex:none}
.grip.h{height:2px;width:20px;background:repeating-linear-gradient(90deg,#444 0 2px,transparent 2px 6px)}
.g1{margin:0 5px 0 5.500px}.g2{margin:0 4px 0 8.500px}.g3{margin:0 5px 0 9px}.g4{margin:0 5px 0 8px}
.sep{width:1px;height:20px;background:#888;flex:none}
.w14{margin:0 6px 0 7px}
.w12{margin:0 5px 0 7px}
.work{display:flex;height:961px}
.browser{width:484px;border-right:2px solid #222;display:flex;flex-direction:column;flex:none;font-family:"Liberation Sans",sans-serif}
.tabs{display:flex;height:27px;font-size:14px;align-items:flex-end;padding-left:4px}
.tabs span{height:26px;line-height:31px;border-top:1px solid #f4f4f4;border-left:1px solid #f4f4f4;border-right:2px solid #777;border-radius:0 3px 0 0;padding-left:7px;width:58px}
.tabs span:nth-child(3){width:64px;padding-left:10px}
.tabs span:nth-child(2){padding-left:10px}
.tabs .sel{width:66px;font-weight:bold;font-size:14.800px;height:27px;padding-left:10px}
.tabs .x{width:10px;height:10px;margin:0 0 18px 213px}
.pane{width:474px;height:931px;border-right:2px solid #808080;border-bottom:2px solid #707070;border-top:1px solid #eee;padding:2px 0 0 4px;display:flex;flex-direction:column}
.modes{display:flex;padding-left:1px;height:34px}
.modes svg{width:28px;height:28px;padding:2px}
.modes .on{background:#f0b983;border:1px solid #9a9a9a;padding:1px 3px 3px 1px}
.search{display:flex;align-items:center;height:19px}
.box{width:447px;height:18px;background:#ececec;border:1px solid #777;display:flex;align-items:center;padding-left:4px;color:#777;font-size:13.200px}
.box span{flex:1}
.box svg{width:15px;height:15px}
.box .cv{width:10px;height:10px;margin:0 0 0 1px}
.dbl{width:10px;height:12px;margin-left:5px}
.acts{display:flex;align-items:center;height:38px;padding:1px 2px 0 5px}
.acts>svg{width:24px;height:22px}
.acts>.s28{width:28px;padding:0 2px}
.acts .sm{width:16px;height:16px}
.acts .car{width:10.500px}
.fill{flex:1}
.eyel{width:28px;display:flex;flex-direction:column;align-items:center;font:bold 10px/9px "Liberation Sans",sans-serif;color:#444}
.eyel svg{width:22px;height:13px}
.grid{display:grid;grid-template-columns:165px 25px 25px 47px 25px 1fr}
.head{height:22px;border:1px solid #9a9fae;font-size:14px;line-height:23px;width:467px}
.head span{border-right:1px solid #9a9fae;height:20px;position:relative}
.head .c:nth-child(3){padding-right:4px}
.head span:last-child{border:0}
.head .sorted{background:#ccdbe6;padding-left:2px}
.sorted svg{position:absolute;left:78px;top:2px;width:8px;height:4px}
.r{text-align:right}
.c{display:flex;align-items:center;justify-content:center}
.hc{width:14px;height:14px}
.head .c:nth-child(5){padding-right:4px}
.wheel{width:14px;height:14px;border-radius:50%;background:conic-gradient(#e33,#ee3,#3d3,#0dd,#22e,#d2d,#e33)}
.tree{flex:1;width:467px;background:#ebebeb;border:1px solid #9a9fae;border-top:0;color:#3c3c3c;font-size:13px;letter-spacing:.2px}
.row{display:grid;grid-template-columns:164px 23px 30px 42px 30px;height:23px;align-items:center;position:relative}
.row:first-child{height:22px}
.tree .n{display:flex;align-items:center;gap:5px;white-space:nowrap}
.tree .n svg{width:16px;height:16px}
.tree .c svg{width:14px;height:14px}
.tree .l0{padding-left:20px}.tree .l1{padding-left:39px}.tree .l2{padding-left:58px}
.row::before{content:"";position:absolute;left:9px;top:0;height:23px;border-left:1px dotted #888}
.row:first-child::before{top:11px;height:12px}
.row:last-child::before{height:12px}
.row::after{content:"";position:absolute;top:11px;left:10px;width:9px;border-top:1px dotted #888}
.row:nth-child(3)::after{left:29px}
.row:nth-child(4)::after,.row:nth-child(5)::after{left:48px}
.row .n::before{content:"";position:absolute;top:8px;left:7px}
.shut .n::before{border:3.500px solid transparent;border-left:4px solid #888;border-right:0}
.open .n::before{border:3.500px solid transparent;border-top:4px solid #111;border-bottom:0;top:10px}
.open .l1::before{left:26px}
.row .l2::before{left:47px;top:0;height:23px;border-left:1px dotted #888}
.last .l2::before{height:11px}
.sw{width:14px;height:14px;border:1px solid #444;background:linear-gradient(90deg,#93a552,#5f7220 60%)}
.sw.red{background:linear-gradient(90deg,#e0655a,#c12620 60%);border-color:#733}
.foot{height:7px;display:flex;align-items:center;padding-left:226px}
.foot .grip.h{width:18px;background:repeating-linear-gradient(90deg,#888 0 2px,transparent 2px 8px)}
.foot svg{width:8px;height:8px;margin-left:210px}
.right{flex:1;display:flex;flex-direction:column;border-right:2px solid #333;margin-right:2px}
.upper{display:flex;height:727px}
.side{width:54px;display:flex;flex-direction:column;align-items:center;padding:6px 2px 0 0}
.side .grip{margin-bottom:7px;margin-left:2px}
.side svg{width:21px;height:21px;margin-bottom:7.250px}
.side .t{font:bold 10px "Liberation Sans",sans-serif;fill:#444}
.side .q{font:9px "Liberation Sans",sans-serif;fill:#222}
.view{width:1371px;position:relative}
#scene{display:block;overflow:hidden;height:727px}
.minfo{position:absolute;right:6px;top:3px;font-size:16.700px;line-height:24px;color:#e3e7eb}
.axl{font-size:16px;fill:#eee}
.vbar{height:39px;display:flex;align-items:center;padding:0 0 2px 8px}
.vbar>svg{width:24px;height:24px;padding:1px}
.vbar>.car{width:14px}
.vbar .grip{margin-right:5px}
.combo{display:flex;align-items:center;height:26px;background:#e9e9e9;font:13.700px "Noto Sans",sans-serif}
.combo svg{width:17px;height:22px;margin-left:1px}
.combo span{flex:1;padding-left:3px;transform:scaleX(.95);transform-origin:0 50%}
.combo .car{width:17px;height:26px;align-items:center;background:#dfdfdf}
.combo .car::after{border-width:5px 4px 0}
.a{width:109px;margin-right:2px}.b{width:116px;margin-right:3px}
.b span{padding-left:4px}
.vbar>.sep{margin:0 7px 0 8px}
.fw{--f:#eee}.fl{--f:#8887b6}
.vbar .m38{margin:0 4px 0 1px}
.panel{display:grid;grid-template-columns:700px 590px 1fr;padding-top:11px;border-bottom:2px solid #222;font-size:16.800px;height:192px;margin-left:2px;margin-right:8px}
.colA,.colB,.colC{display:flex;flex-direction:column;min-width:0}
.ln{height:25px;display:flex;align-items:center;white-space:nowrap}
.ln>*{flex:none}
.bt{height:25px;padding:0 0 0 4px;border:1px solid;border-color:#eee #6c6c6c #6c6c6c #eee;border-right-width:2px;border-bottom-width:2px;background:#dedede;color:#1c1c1c;font:inherit;line-height:20px;display:flex;align-items:center;justify-content:center;flex:none}
.bt.w40{width:40px;padding:0}
.bt svg{width:13px;height:14px}
.tri{border:6.500px solid transparent;border-top:7px solid #111;border-bottom:0}
.nodes{width:240px;background:#d9d766;border:2px solid #29dfdf;border-top-color:#5fcaa0;padding-bottom:1px}
.radio{width:11px;height:11px;border-radius:50%;background:#eee;border:1.500px solid;border-color:#333 #eee #eee #333;margin:-2px 15px 0 15px;display:flex;align-items:center;justify-content:center;flex:none}
.radio.on::after{content:"";width:4px;height:4px;border-radius:50%;background:#111}
.lab{width:59px;margin-top:-3px}
.ind{padding-left:100px}
.rel{width:300px}
.in{height:24px;background:#ebebeb;border:1px solid #eee;border-top:2px solid #6c6c6c;border-left:2px solid #6c6c6c;text-align:right;line-height:22px}
.rin{width:219px}
.rin,.dof .in{font-size:17.100px}
.ck{width:19px;height:19px;background:#eee;border:1px solid;border-color:#666 #f4f4f4 #f4f4f4 #666;border-width:2px 1px 1px 2px;display:flex;flex:none}
.ck svg{width:16px;height:16px}
.m14{margin:0 10px 0 12px}
.lc{margin-top:-2px}
.con{width:280px}
.dof{padding-left:91px}
.dof span:nth-child(2){width:90px;padding-left:11px;margin-top:-2px}
.dof .bt{width:59px}
.dof .in{width:216px}
.lt{width:240px}
.li{width:330px;text-align:left;padding-left:6px}
.colC .bt{width:114px}
.colC{position:relative}
.g{background:#62b564;border-color:#93d095 #3c7a3e #3c7a3e #93d095}
.foc{border:2px solid #123c14;padding-bottom:1px}
.bl{background:#6e7dd2;border-color:#9fb0f0 #3b4690 #3b4690 #9fb0f0}
.rd{background:#b65c5e;border-color:#cf9090 #7a3c3e #7a3c3e #cf9090;margin-top:50px}
.pointer{position:absolute;left:71px;top:13px;width:12px;height:20px}
.status{height:27px;display:flex;align-items:flex-start;padding-top:2px;border-bottom:2px solid #555;font-size:14px;line-height:22px}
.msg{width:1312px;padding:2px 0 0 14px;line-height:20px;color:#333;letter-spacing:.6px}
.cell{border-top:2px solid #333;border-left:2px solid #333;height:23px;margin-right:2px;padding-left:2px;color:#444;line-height:22px;letter-spacing:.1px}
.c1{width:139px}.c2{width:161px}.c3{width:160px}
```
FILE: scene.js
```js
// Wall mesh with a constraint marker on every boundary node.
const NS = "http://www.w3.org/2000/svg";
const wall = document.getElementById("wall");
const TL = [911.3, 286.3], TR = [1105.9, 247], BR = [1082.3, 635], BL = [888.5, 674.3];
const add = (tag, attrs) => {
  const el = document.createElementNS(NS, tag);
  for (const k in attrs) el.setAttribute(k, attrs[k]);
  wall.appendChild(el);
};
const mix = (a, b, t) => [a[0] + (b[0] - a[0]) * t, a[1] + (b[1] - a[1]) * t];
add("path", { d: `M${TL}L${TR}L${BR}L${BL}Z`, fill: "#7d2723" });
for (let i = 1; i < 30; i++) {
  const a = mix(TL, TR, i / 30), b = mix(BL, BR, i / 30);
  add("path", { d: `M${a}L${b}`, stroke: "#651b19", "stroke-width": 0.8, opacity: 0.5, "stroke-dasharray": `${20 + (i * 7) % 30} ${4 + (i * 5) % 9}` });
}
for (let i = 1; i < 26; i++) {
  const a = mix(TL, BL, i / 26), b = mix(TR, BR, i / 26);
  add("path", { d: `M${a}L${b}`, stroke: "#601917", "stroke-width": 0.9, opacity: 0.55, "stroke-dashoffset": (i * 13) % 60, "stroke-dasharray": `${18 + (i * 11) % 30} ${12 + (i * 7) % 30}` });
}
const row = (a, b, n, rx0, rx1, ry0, ry1) => {
  for (let i = n; i >= 0; i--) {
    const t = i / n, p = mix(a, b, t);
    add("ellipse", { cx: p[0], cy: p[1], rx: rx0 + (rx1 - rx0) * t, ry: ry0 + (ry1 - ry0) * t, fill: "url(#ball)" });
  }
};
row(TR, BR, 25, 5.6, 5, 7.4, 7.2);
row(TL, TR, 26, 6.6, 5.8, 6.8, 6.6);
row(BL, BR, 26, 6, 4.6, 6.4, 6.4);
row(TL, BL, 25, 7, 6.8, 7.3, 7.1);
```
